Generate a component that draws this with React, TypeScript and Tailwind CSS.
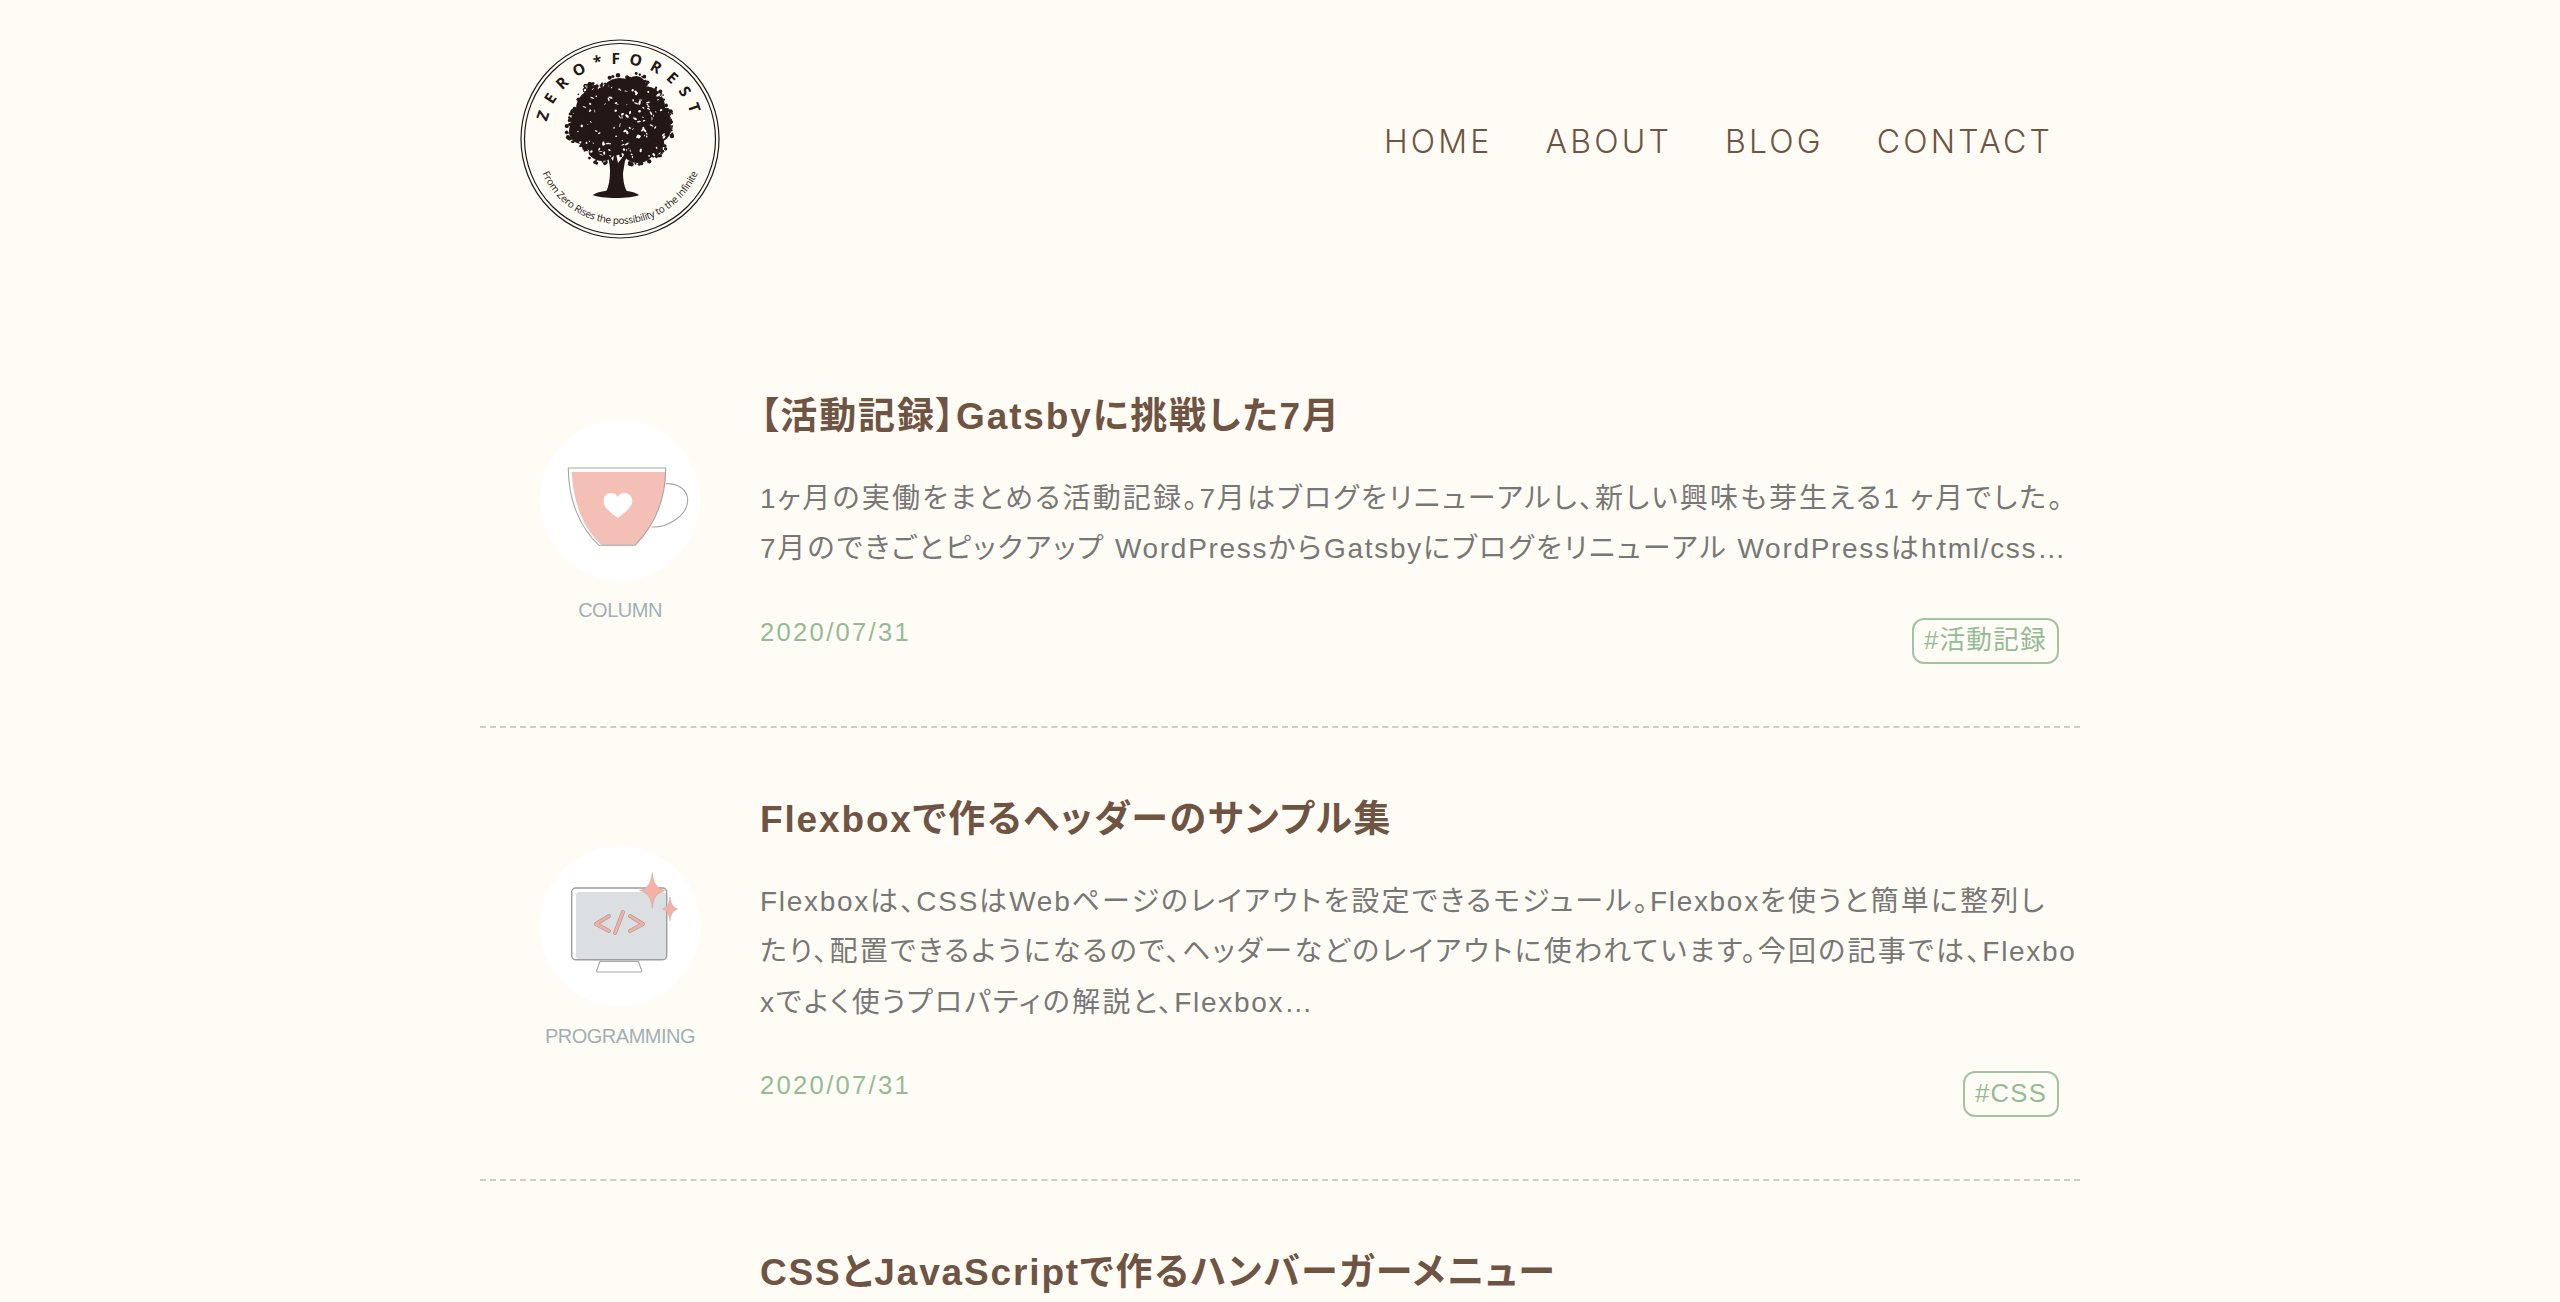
import React from "react";

function rng(seed: number) {
  let s = seed;
  return () => {
    s = (s * 16807) % 2147483647;
    return (s - 1) / 2147483646;
  };
}

const lobes: [number, number, number][] = [
  [100, 60, 23], [76, 70, 22], [124, 68, 23], [62, 92, 15], [138, 90, 15], [100, 88, 30], [82, 106, 18], [118, 106, 20],
  [72, 55, 10], [116, 47, 12], [58, 80, 9], [143, 78, 9], [136, 108, 9],
];

function Tree() {
  const r = rng(4711);
  const dark: React.ReactElement[] = [];
  const light: React.ReactElement[] = [];
  lobes.forEach(([cx, cy, rad], i) => {
    dark.push(<circle key={`l${i}`} cx={cx} cy={cy} r={rad - 2} />);
    for (let k = 0; k < 30; k++) {
      const a = r() * Math.PI * 2;
      const d = rad - 2 + r() * 3;
      dark.push(<circle key={`e${i}-${k}`} cx={cx + Math.cos(a) * d} cy={cy + Math.sin(a) * d} r={0.8 + r() * 1.5} />);
    }
  });
  for (let k = 0; k < 120; k++) {
    const x = 56 + r() * 88;
    const y = 46 + r() * 72;
    light.push(<ellipse key={`w${k}`} cx={x} cy={y} rx={0.4 + r() * 1.9} ry={0.3 + r() * 1.0} transform={`rotate(${r() * 180} ${x} ${y})`} />);
  }
  return (
    <g>
      <g fill="#231815">{dark}</g>
      <g fill="#fffdf8">{light}</g>
      <path
        d="M84 108L93 122L95 110L98 124L112 106L105 122L103 134C103 141 104 147 107 153L86 153C89 147 90 140 90 132C90 122 87 114 84 108Z"
        fill="#231815"
      />
      <path d="M73 156C77 153 84 152 92 151L100 151C106 152 114 152 119 156C112 160 80 160 73 156Z" fill="#231815" />
    </g>
  );
}

function Logo() {
  return (
    <svg viewBox="0 0 200 200" className="w-[200px] h-[200px] block" aria-label="ZERO*FOREST">
      <circle cx="100" cy="100" r="99" fill="none" stroke="#231815" strokeWidth="1.2" />
      <circle cx="100" cy="100" r="95.5" fill="none" stroke="#231815" strokeWidth="1.2" />
      <defs>
        <path id="logoTop" d="M25 100A75 75 0 0 1 175 100" />
        <path id="logoBottom" d="M15 100A85 85 0 0 0 185 100" />
      </defs>
      <text fill="#231815" fontFamily="'Open Sans', sans-serif" fontWeight="700" fontSize="15.500" letterSpacing="8.6" textAnchor="middle">
        <textPath href="#logoTop" startOffset="50%">ZERO*FOREST</textPath>
      </text>
      <text fill="#231815" fontFamily="'Open Sans', sans-serif" fontSize="10" textAnchor="middle" letterSpacing="-0.25">
        <textPath href="#logoBottom" startOffset="50%">From Zero Rises the possibility to the Infinite</textPath>
      </text>
      <Tree />
    </svg>
  );
}

function Cup() {
  return (
    <svg viewBox="0 0 160 160" className="w-[160px] h-[160px] block">
      <circle cx="80" cy="80" r="80" fill="#ffffff" />
      <path d="M31.7 52H125.7C125 78 115 105 95 125.3H62C42 108 33 80 31.7 52Z" fill="#f4bfb4" />
      <path d="M28.3 48H125.7C125.7 80 115 105 95 125.3H59C40 108 28.3 80 28.3 48Z" fill="none" stroke="#a5a5a5" strokeWidth="1.1" />
      <path d="M125.5 63.7C137 63 147.7 69 147.7 80.3C147.7 95 128 108 111.7 107" fill="none" stroke="#a5a5a5" strokeWidth="1.1" />
      <path d="M77.7 98C72 93.5 63.5 88 63.5 81C63.5 76 67 73 71 73C74 73 76.5 74.5 77.7 77C79 74.5 81.5 73 84.5 73C88.5 73 92.3 76 92.3 81C92.3 88 83.5 93.5 77.7 98Z" fill="#ffffff" />
    </svg>
  );
}

function Monitor() {
  return (
    <svg viewBox="0 0 160 160" className="w-[160px] h-[160px] block">
      <circle cx="80" cy="80" r="80" fill="#ffffff" />
      <rect x="36" y="46" width="90" height="67" rx="3" fill="#dcdfe1" />
      <rect x="31.7" y="42" width="95" height="71.7" rx="4" fill="none" stroke="#9a9c9e" strokeWidth="1.4" />
      <path d="M60 115.3H98.3L101.7 124.5Q102 126 100 126H58Q56.3 126 56.7 124.5Z" fill="#ffffff" stroke="#a5a7a8" strokeWidth="1.2" />
      <g fill="none" strokeLinecap="round" strokeLinejoin="round">
        <path d="M69 70L56 78L69 85M83 66L75 87M90 70L103 78L90 85" stroke="#b79a96" strokeWidth="4" />
        <path d="M69 70L56 78L69 85M83 66L75 87M90 70L103 78L90 85" stroke="#f0b0a6" strokeWidth="2.6" />
      </g>
      <path d="M112.3 26.5C113.5 37 116 42 125.5 44.5C116 47 113.5 52 112.3 62.5C111 52 108.500 47 99.500 44.500C108.500 42 111 37 112.300 26.500Z" fill="#f3b1a8" stroke="#c4a8a4" strokeWidth="0.5" />
      <path d="M130 51C130.800 57.500 132.500 60.800 137.500 63C132.500 65.200 130.800 68.500 130 75C129.200 68.500 127.500 65.200 122.500 63C127.500 60.800 129.200 57.500 130 51Z" fill="#f3b1a8" stroke="#c4a8a4" strokeWidth="0.5" />
    </svg>
  );
}

function Category({ icon, label, className }: { icon: React.ReactNode; label: string; className: string }) {
  return (
    <div className={`w-[280px] shrink-0 flex flex-col items-center gap-[16px] ${className}`}>
      {icon}
      <span className="text-[20px] leading-[28px] tracking-[-0.5px] text-[#9fb0b6]">{label}</span>
    </div>
  );
}

function Line({ text }: { text: string }) {
  const parts = text.split(/([A-Za-z0-9/… ]+)/);
  return (
    <div className="whitespace-pre">
      {parts.map((p, i) =>
        p === "" ? null : i % 2 === 1 ? (
          <span key={i} className="tracking-[1.7px]">{p}</span>
        ) : (
          <span key={i}>{p}</span>
        ),
      )}
    </div>
  );
}

function Article({ title, lines, tag, icon, label, offset }: { title: string; lines: string[]; tag: string; icon: React.ReactNode; label: string; offset: string }) {
  return (
    <article className="flex items-center border-b-2 border-dashed border-[#cfcdc8] pt-[62px] pb-[62px]">
      <Category icon={icon} label={label} className={offset} />
      <div className="w-[1320px]">
        <h2 className="text-[37px] leading-[60px] font-bold tracking-[1.85px] text-[#6f5443]">{title}</h2>
        <div className="mt-[27px] text-[28px] leading-[50.4px] tracking-[2.2px] text-[#777775]">
          {lines.map((l) => (
            <Line key={l} text={l} />
          ))}
        </div>
        <div className="mt-[35px] flex justify-between items-start pr-[21px]">
          <time className="text-[25.6px] leading-[44px] tracking-[2.3px] text-[#93bb96]">2020/07/31</time>
          <span className="mt-[8px] border-2 border-[#a1c5a4] rounded-[12px] px-[10px] h-[46px] leading-[40px] text-[25.6px] tracking-[1.3px] text-[#93bb96]">{tag}</span>
        </div>
      </div>
    </article>
  );
}

export default function App() {
  return (
    <div className="h-[1302px] overflow-hidden bg-[#fffcf5] font-['Liberation_Sans','Noto_Sans_CJK_JP',sans-serif] [font-feature-settings:'palt']">
      <div className="w-[1600px] mx-auto">
        <header className="flex items-center justify-between h-[280px] pl-[40px] pr-[27px] pb-[2px]">
          <Logo />
          <nav className="flex gap-[53px] pt-[6px] font-['Inter',sans-serif] font-light text-[32px] tracking-[3.2px] text-[#6f5443]">
            <a>HOME</a>
            <a>ABOUT</a>
            <a>BLOG</a>
            <a>CONTACT</a>
          </nav>
        </header>
        <main className="[&>article:first-child]:pt-[50px]">
          <div className="h-[45px]" />
          <Article
            title="【活動記録】Gatsbyに挑戦した7月"
            lines={[
              "1ヶ月の実働をまとめる活動記録。7月はブログをリニューアルし、新しい興味も芽生える1 ヶ月でした。",
              "7月のできごとピックアップ WordPressからGatsbyにブログをリニューアル WordPressはhtml/css…",
            ]}
            tag="#活動記録"
            icon={<Cup />}
            label="COLUMN"
            offset="-mt-[6px]"
          />
          <Article
            title="Flexboxで作るヘッダーのサンプル集"
            lines={[
              "Flexboxは、CSSはWebページのレイアウトを設定できるモジュール。Flexboxを使うと簡単に整列し",
              "たり、配置できるようになるので、ヘッダーなどのレイアウトに使われています。今回の記事では、Flexbo",
              "xでよく使うプロパティの解説と、Flexbox…",
            ]}
            tag="#CSS"
            icon={<Monitor />}
            label="PROGRAMMING"
            offset="-mt-[10px]"
          />
          <div className="flex">
            <div className="w-[280px] shrink-0" />
            <h2 className="pt-[62px] text-[37px] leading-[60px] font-bold tracking-[1.85px] text-[#6f5443]">CSSとJavaScriptで作るハンバーガーメニュー</h2>
          </div>
        </main>
      </div>
    </div>
  );
}
